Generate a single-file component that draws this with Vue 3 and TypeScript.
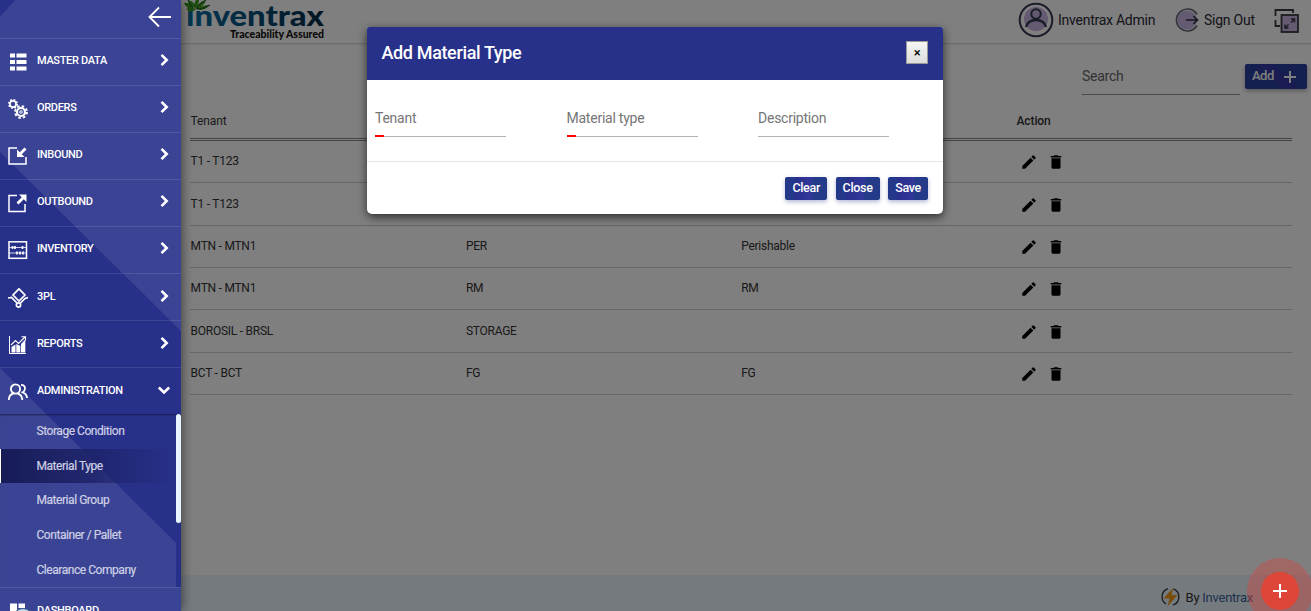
<script setup lang="ts">
interface MenuItem {
  label: string
  icon: string
}

const menu: MenuItem[] = [
  { label: 'MASTER DATA', icon: 'list' },
  { label: 'ORDERS', icon: 'gears' },
  { label: 'INBOUND', icon: 'in' },
  { label: 'OUTBOUND', icon: 'out' },
  { label: 'INVENTORY', icon: 'rack' },
  { label: '3PL', icon: 'pl' },
  { label: 'REPORTS', icon: 'chart' },
  { label: 'ADMINISTRATION', icon: 'users' },
]

const submenu: string[] = [
  'Storage Condition',
  'Material Type',
  'Material Group',
  'Container / Pallet',
  'Clearance Company',
]

const columns: string[] = ['Tenant', '', '', 'Action']

const rows: string[][] = [
  ['T1 - T123', '', ''],
  ['T1 - T123', '', ''],
  ['MTN - MTN1', 'PER', 'Perishable'],
  ['MTN - MTN1', 'RM', 'RM'],
  ['BOROSIL - BRSL', 'STORAGE', ''],
  ['BCT - BCT', 'FG', 'FG'],
]

const fields = [
  { label: 'Tenant', required: true },
  { label: 'Material type', required: true },
  { label: 'Description', required: false },
]

const actions: string[] = ['Clear', 'Close', 'Save']
</script>

<template>
  <div class="app">
    <div class="page">
      <header class="topbar">
        <svg class="logo" width="142" height="43" viewBox="0 0 142 43">
          <defs>
            <linearGradient id="brand" x1="0" x2="1">
              <stop offset="0" stop-color="#0a6fa4" />
              <stop offset="0.45" stop-color="#06507c" />
              <stop offset="1" stop-color="#032b45" />
            </linearGradient>
          </defs>
          <text class="brand" x="2" y="26" textLength="138" lengthAdjust="spacingAndGlyphs" fill="url(#brand)">inventrax</text>
          <path d="M0 3Q6 2 9 8Q2 9 0 3ZM4 0Q11 1 11 8Q5 5 4 0ZM12 0H15Q15 5 11 9Q9 4 12 0ZM22 0Q20 7 12 9Q14 2 22 0ZM26 5Q19 5 13 9Q19 12 26 5ZM2 9Q7 7 12 9Q7 14 2 9Z" fill="#3d9a20" />
          <path d="M9 8Q5 4 4 0M12 9Q15 3 22 0M13 9Q20 9 26 5" fill="none" stroke="#1c5a16" stroke-width="1" />
          <text class="tagline" x="46" y="38" textLength="94" lengthAdjust="spacingAndGlyphs">Traceability Assured</text>
        </svg>
        <div class="account">
          <svg class="avatar" width="36" height="36" viewBox="0 0 36 36" fill="none" stroke="#343a50" stroke-width="2">
            <circle cx="18" cy="17" r="12" fill="#c8b4e2" stroke="none" />
            <circle cx="18" cy="18" r="16.3" />
            <circle cx="18" cy="12" r="4.7" />
            <path d="M8 25Q10 18 18 18T28 25" stroke-width="2.3" />
          </svg>
          <span class="who">Inventrax Admin</span>
          <svg class="exit" width="24" height="24" viewBox="0 0 24 24" fill="none">
            <circle cx="12" cy="12" r="9.500" fill="#c8b4e2" />
            <path d="M22 6.500A11 11 0 1 0 22 17.500" stroke="#686878" stroke-width="1.700" />
            <path d="M11 12H22.500M18.500 8L22.500 12L18.500 16" stroke="#303340" stroke-width="1.700" />
          </svg>
          <span class="out">Sign Out</span>
          <svg class="expand" width="26" height="26" viewBox="0 0 26 26" fill="none" stroke="#3b3943" stroke-width="1.8">
            <path d="M1.500 8V2H19V5M1.500 12V18H6" />
            <rect x="7.500" y="7" width="16.500" height="17" fill="#c8b4e2" />
            <path d="M17 11H20.500V14.500M20 11.500L17 14.500M14.500 20H11V16.500M11.500 19.500L14.500 16.500" stroke-width="1.400" />
          </svg>
        </div>
      </header>

      <div class="toolbar">
        <div class="search">Search</div>
        <div class="add">Add
          <svg width="14" height="14" viewBox="0 0 14 14"><path d="M7 1V13M1 7H13" stroke="#fff" stroke-width="2" /></svg>
        </div>
      </div>

      <div class="table">
        <div class="row head"><span v-for="(c, i) in columns" :key="i" class="cell">{{ c }}</span></div>
        <div v-for="(r, i) in rows" :key="i" class="row">
          <span v-for="(c, j) in r" :key="j" class="cell">{{ c }}</span>
          <span class="cell tools">
            <svg width="18" height="18" viewBox="0 0 24 24"><path d="M3 17.250V21h3.750L17.810 9.940l-3.750-3.750L3 17.250zM20.710 7.040a1 1 0 0 0 0-1.410l-2.340-2.340a1 1 0 0 0-1.410 0l-1.830 1.830 3.750 3.750 1.830-1.830z" /></svg>
            <svg width="18" height="18" viewBox="0 0 24 24"><path d="M6 19c0 1.100.9 2 2 2h8c1.100 0 2-.9 2-2V7H6v12zM19 4h-3.500l-1-1h-5l-1 1H5v2h14V4z" /></svg>
          </span>
        </div>
      </div>

      <footer class="footer">
        <svg width="19" height="20" viewBox="0 0 19 20">
          <path d="M7 1.600A8.600 8.600 0 0 0 5 17M12.500 1.900A8.600 8.600 0 0 1 12 18" fill="none" stroke="#333" stroke-width="1.300" />
          <path d="M12 1L2.500 11.500H8.500L6.500 19.500L16.500 8H10.500Z" fill="#f39a13" />
        </svg>
        <span>By <b>Inventrax</b></span>
      </footer>
    </div>

    <div class="backdrop"></div>

    <nav class="sidebar">
      <svg class="facets" width="181" height="611" viewBox="0 0 181 611">
        <path d="M15 0H181V331L0 152V17Z" />
        <path d="M0 368L176 543V587H181V611H0Z" />
      </svg>
      <div class="collapse">
        <svg width="24" height="22" viewBox="0 0 24 22" fill="none" stroke="#fff" stroke-width="1.800"><path d="M23 11H2M11 1.500L1.500 11L11 20.500" /></svg>
      </div>
      <div v-for="m in menu" :key="m.label" class="item">
        <svg class="icon" width="20" height="20" viewBox="0 0 20 20" fill="none" stroke="#fff" stroke-width="1.300">
          <path v-if="m.icon === 'list'" fill="#fff" stroke="none" d="M2 1.500H7V5.500H2ZM8.500 1.500H18.500V5.500H8.500ZM2 8H7V12H2ZM8.500 8H18.500V12H8.500ZM2 14.500H7V18.500H2ZM8.500 14.500H18.500V18.500H8.500Z" />
          <g v-else-if="m.icon === 'gears'">
            <circle cx="5" cy="5" r="3.100" stroke-width="1.700" />
            <circle cx="5" cy="5" r="4.300" stroke-width="1.500" stroke-dasharray="1.700 1.677" />
            <circle cx="13" cy="13" r="4" stroke-width="2.200" />
            <circle cx="13" cy="13" r="5.900" stroke-width="2" stroke-dasharray="2.500 2.134" />
            <circle cx="13" cy="13" r="1.300" stroke-width="1" />
          </g>
          <g v-else-if="m.icon === 'in'">
            <path d="M9 2H1V18H18V11" stroke-width="1.500" />
            <path d="M17.500 2.500L11.500 8.500" stroke-width="2.800" />
            <path d="M9 3.500V11H16.500Z" fill="#fff" stroke="none" />
          </g>
          <g v-else-if="m.icon === 'out'">
            <path d="M9 2.500H1V18.500H17V11" stroke-width="1.500" />
            <path d="M9.500 10.500L15 5" stroke-width="2.800" />
            <path d="M11 1.500H18.500V9Z" fill="#fff" stroke="none" />
          </g>
          <g v-else-if="m.icon === 'rack'">
            <rect x="1" y="1.800" width="17.500" height="16.500" stroke-width="1.500" />
            <path d="M1 7.500H18.500M1 13H18.500" stroke-width=".8" />
            <path d="M4.500 6V9M7 6V9M14.500 6V9M9 11.500V14.500M12 11.500V14.500M15 11.500V14.500" stroke-width="1.700" />
          </g>
          <g v-else-if="m.icon === 'pl'" stroke-width="1.700">
            <path d="M11 .8L17 7L11 13L5 7Z" />
            <path d="M0 10L3.500 9.500L9 15M20 9.500L17 10.500L12 15.500" />
            <circle cx="10.500" cy="17" r="2.100" />
          </g>
          <g v-else-if="m.icon === 'chart'">
            <path d="M1.500 1V18.500H18" stroke-width="1" />
            <path d="M3.500 12L7.500 9.500V17.500H3.500ZM8.300 9L12.300 11V17.500H8.300ZM13 9L17.300 4.500V17.500H13Z" fill="#fff" stroke="none" />
            <path d="M3 10L7.500 5.500L10.500 8.500L17 2M13.500 1.800H17.500V5.500" stroke-width="1.100" />
          </g>
          <g v-else stroke-width="1.800">
            <circle cx="7.500" cy="7" r="4.600" />
            <path d="M.8 18Q1 12.500 5.500 11.500M9.500 11.500Q14 12.500 14.300 18" />
            <path d="M13 2.800Q17 2.800 17 6.500Q17 9 14.800 10.300Q19 12 19 16" />
          </g>
        </svg>
        <span class="label">{{ m.label }}</span>
        <svg class="chev" width="14" height="14" viewBox="0 0 14 14" fill="none" stroke="#fff" stroke-width="2.600">
          <path v-if="m.icon === 'users'" d="M1.800 4.500L7 9.500L12.200 4.500" />
          <path v-else d="M4.500 1.800L9.700 7L4.500 12.200" />
        </svg>
      </div>
      <div class="submenu">
        <div v-for="s in submenu" :key="s" class="sub" :class="{ active: s === 'Material Type' }">{{ s }}</div>
        <div class="thumb"></div>
      </div>
      <div class="item last">
        <svg class="icon" width="20" height="20" viewBox="0 0 20 20" fill="#fff"><path d="M2 1.500H9V12H2ZM10.500 1.500H17V6H10.500ZM10.500 7.500H18V18H10.500Z" /></svg>
        <span class="label">DASHBOARD</span>
        <div class="bubble"></div>
      </div>
    </nav>

    <section class="dialog">
      <div class="title">
        <span>Add Material Type</span>
        <div class="close">×</div>
      </div>
      <div class="fields">
        <div v-for="f in fields" :key="f.label" class="field" :class="{ required: f.required }">{{ f.label }}</div>
      </div>
      <div class="actions">
        <div v-for="a in actions" :key="a" class="btn">{{ a }}</div>
      </div>
    </section>

    <div class="fab">
      <svg width="14" height="14" viewBox="0 0 14 14"><path d="M7 0V14M0 7H14" stroke="#fff" stroke-width="2" /></svg>
    </div>
  </div>
</template>

<style>
body {
  overflow: hidden;
}
</style>

<style scoped>
.app {
  position: relative;
  width: 1311px;
  height: 611px;
  overflow: hidden;
  background: #fff;
  font-family: Roboto, sans-serif;
  color: #333;
}
.app * {
  box-sizing: border-box;
}
.page {
  display: flex;
  flex-direction: column;
  height: 611px;
  padding-left: 181px;
}
.topbar {
  display: flex;
  justify-content: space-between;
  height: 44px;
  padding: 0 11px 0 3px;
  border-bottom: 1px solid #dcdcdc;
  box-shadow: 0 1px 1px #eee;
}
.logo {
  overflow: visible;
}
.brand {
  font: 900 29px Lato, sans-serif;
}
.tagline {
  font: 900 11px Lato, sans-serif;
  fill: #111;
}
.account {
  display: flex;
  align-items: center;
  height: 39px;
  font-size: 14px;
  letter-spacing: -0.25px;
  color: #2a2a35;
}
.avatar {
  margin-top: 1px;
}
.who {
  width: 97px;
  margin-left: 4px;
  white-space: nowrap;
}
.exit {
  margin: 1px 5px 0 20px;
}
.out {
  width: 51px;
  white-space: nowrap;
}
.expand {
  margin: 3px 0 0 19px;
}
.toolbar {
  display: flex;
  justify-content: flex-end;
  gap: 5px;
  height: 60px;
  padding: 20px 4px 0 0;
}
.search {
  width: 158px;
  height: 31px;
  padding-top: 4px;
  border-bottom: 1px solid #999;
  font-size: 14px;
  line-height: 16px;
  letter-spacing: -0.25px;
  color: #666;
}
.add {
  display: flex;
  align-items: center;
  justify-content: space-between;
  width: 62px;
  height: 25px;
  padding: 0 10px 2px 7px;
  border-radius: 2px;
  background: linear-gradient(45deg, #2a3fa0 44%, #3a3aa8 44%, #2f36a4 62%, #2a3fa0 62%);
  box-shadow: 0 2px 4px rgba(0, 0, 0, 0.3);
  font-size: 13px;
  font-weight: 500;
  letter-spacing: -0.5px;
  color: #fff;
}
.add svg {
  margin-top: 3px;
}
.table {
  width: 1102px;
  margin-left: 9px;
}
.row {
  display: grid;
  grid-template-columns: repeat(4, 275.300px);
  align-items: center;
  height: 42.350px;
  padding-bottom: 1px;
  border-bottom: 1px solid #cfcfcf;
  font-size: 12px;
  letter-spacing: -0.25px;
}
.head {
  height: 37px;
  padding-bottom: 0;
  border-bottom: 3px double #888;
  font-weight: 500;
  letter-spacing: -0.1px;
}
.head .cell:first-child {
  font-weight: 400;
}
.cell {
  padding-left: 0.600px;
}
.tools {
  display: flex;
  gap: 9px;
  padding: 2px 0 0 4px;
}
.footer {
  display: flex;
  align-items: center;
  gap: 6px;
  height: 36px;
  margin-top: auto;
  padding: 8px 58px 0 0;
  justify-content: flex-end;
  background: #eaf4ff;
  font-size: 13px;
  letter-spacing: -0.25px;
}
.footer b {
  font-weight: 400;
  color: #3a6299;
}
.backdrop {
  position: absolute;
  inset: 0;
  background: rgba(0, 0, 0, 0.5);
}
.sidebar {
  position: absolute;
  top: 0;
  left: 0;
  width: 181px;
  height: 611px;
  background: #28318a;
  box-shadow: 1px 0 10px rgba(0, 0, 0, 0.5);
  color: #fff;
}
.facets {
  position: absolute;
  top: 0;
  left: 0;
  fill: #3b4494;
}
.collapse {
  position: relative;
  display: flex;
  height: 37.500px;
  padding: 6px 9px 0 0;
  justify-content: flex-end;
}
.item {
  position: relative;
  display: flex;
  align-items: center;
  height: 47.100px;
  padding: 0 10.500px 2px 8px;
  border-top: 1px solid rgba(255, 255, 255, 0.1);
}
.icon {
  margin-top: 3px;
}
.chev {
  margin-bottom: 1px;
}
.label {
  flex: 1;
  margin-left: 9px;
  font-size: 11px;
  font-weight: 500;
  letter-spacing: -0.32px;
  white-space: nowrap;
}
.submenu {
  position: relative;
  height: 173px;
  box-shadow: inset 0 2px 2px -1px rgba(0, 0, 20, 0.5);
}
.sub {
  height: 34.600px;
  padding-left: 36.500px;
  font-size: 12px;
  line-height: 34px;
  letter-spacing: -0.45px;
  color: #ced0e5;
  -webkit-text-stroke: 0.2px #ced0e5;
}
.active {
  width: 176px;
  padding-left: 35.500px;
  border-left: 1px solid #fff;
  background: linear-gradient(90deg, #171c57, rgba(27, 32, 101, 0.8) 50%, transparent);
}
.thumb {
  position: absolute;
  top: 0;
  right: 0;
  width: 5px;
  height: 109px;
  border-radius: 3px;
  background: #e9f5ff;
}
.bubble {
  position: absolute;
  left: 12px;
  top: 20px;
  width: 22px;
  height: 22px;
  border: 1px solid #345f91;
  border-radius: 50%;
  background: #c6d6e2;
}
.dialog {
  position: absolute;
  left: 367px;
  top: 27px;
  width: 576px;
  height: 187px;
  border-radius: 2px 2px 5px 5px;
  background: #fff;
  box-shadow: 0 3px 10px rgba(0, 0, 0, 0.65);
}
.title {
  display: flex;
  align-items: center;
  justify-content: space-between;
  height: 53px;
  padding: 0 15px 2px 14.500px;
  border-radius: 2px 2px 0 0;
  background: #28318a;
  color: #fff;
  font-size: 18px;
  font-weight: 500;
  letter-spacing: -0.36px;
}
.close {
  width: 22px;
  height: 23px;
  border: 1px solid #999;
  background: linear-gradient(#f5f5f5, #ddd);
  color: #111;
  font-size: 13px;
  line-height: 21px;
  text-align: center;
}
.fields {
  display: grid;
  grid-template-columns: repeat(3, 191.500px);
  height: 82px;
  padding: 28px 0 0 8px;
  border-bottom: 1px solid #e5e5e5;
}
.field {
  position: relative;
  width: 131px;
  height: 29px;
  padding-top: 2px;
  border-bottom: 1px solid #b5b0b2;
  font-size: 14px;
  line-height: 16px;
  letter-spacing: -0.24px;
  color: #757575;
}
.required::after {
  content: '';
  position: absolute;
  left: 0;
  bottom: -1px;
  width: 9px;
  height: 2px;
  background: #f00;
}
.actions {
  display: flex;
  justify-content: flex-end;
  gap: 8.500px;
  padding: 15px 15px 0 0;
}
.btn {
  height: 23px;
  padding: 0 7px;
  border-radius: 2px;
  background: radial-gradient(circle at 115% 55%, #243b8a 45%, #33379a 46%, #29308c 78%, #24388a 80%);
  box-shadow: 0 2px 4px rgba(40, 49, 138, 0.35);
  color: #fff;
  font-size: 12.500px;
  font-weight: 500;
  line-height: 22px;
  letter-spacing: -0.3px;
}
.fab {
  position: absolute;
  left: 1261px;
  top: 572px;
  display: flex;
  align-items: center;
  justify-content: center;
  width: 38px;
  height: 38px;
  border-radius: 50%;
  background: #dd4638;
  box-shadow: 0 0 0 14px rgba(210, 70, 60, 0.4);
}
</style>
